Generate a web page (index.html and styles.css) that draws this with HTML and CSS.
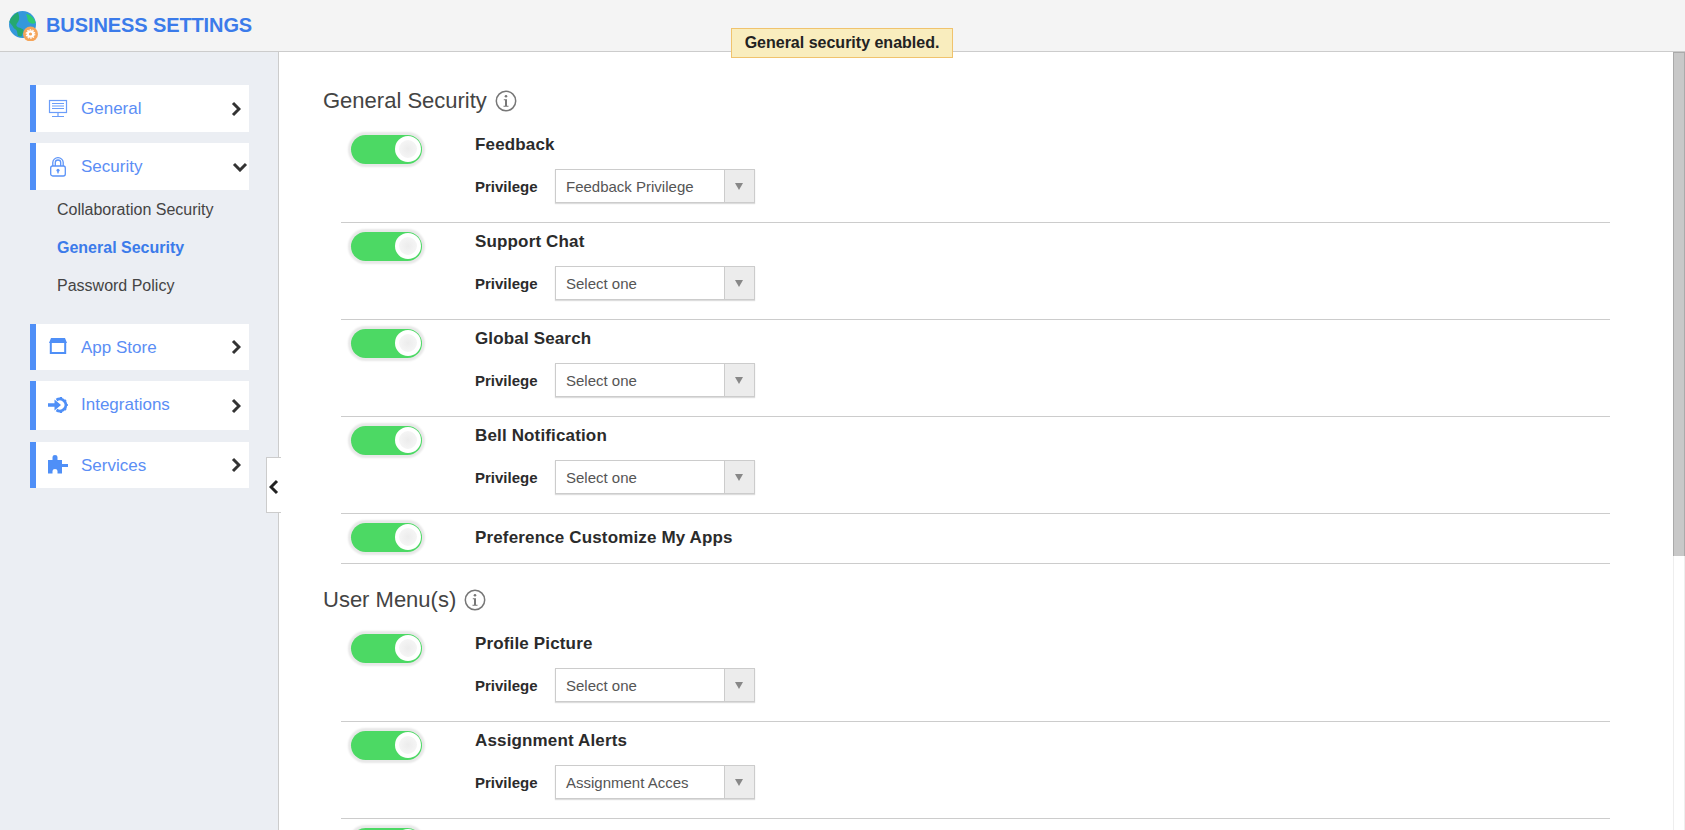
FILE: index.html
```html
<!DOCTYPE html>
<html lang="en">
<head>
<meta charset="utf-8">
<title>Business Settings</title>
<link rel="stylesheet" href="styles.css">
</head>
<body>
<div class="app">
  <header class="topbar">
    <svg class="logo" viewBox="0 0 30 30" width="30" height="30" aria-hidden="true">
      <circle cx="13.5" cy="13.5" r="13.5" fill="#3498db"/>
      <path d="M9 1.2C5 3 1.5 6.5.4 11c1.5 2.5 3 3 4 5.5 1 2 3 1.5 3.500 3.500l1 5c2 .5 3 .5 4 .3 0-3 2-3 1.500-6-.5-2-3.500-2-5.500-3-2-1-2-3-.5-4.500C10 10 11 7 9 1.200Z" fill="#25a86f"/>
      <path d="M17 3c2 4 1 6 3 8s4 2 6.500 1C26 8 22 3.500 17 3Z" fill="#2ecc71"/>
      <circle cx="21.500" cy="23" r="7.500" fill="#f5a55a"/>
      <circle cx="21.500" cy="23" r="2.700" fill="none" stroke="#fff" stroke-width="2.200"/>
      <circle cx="21.500" cy="23" r="4.300" fill="none" stroke="#fff" stroke-width="1.100" stroke-dasharray="1.500 1.200"/>
    </svg>
    <h1 class="app-title">BUSINESS SETTINGS</h1>
  </header>

  <div class="toast">General security enabled.</div>

  <div class="body">
    <aside class="sidebar">
      <div class="nav-item">
        <span class="nav-label">
          <svg class="nav-icon" viewBox="0 0 20 20" width="20" height="20" aria-hidden="true"><g fill="none" stroke="#6b9df9" stroke-width="1.200"><rect x="1.500" y="1.500" width="17" height="12"/><path d="M4 4.500h12M4 7h12M4 9.500h12M10 14v3M4 17.500h12"/></g></svg>
          General
        </span>
        <svg class="chev" viewBox="0 0 10 16" width="10" height="16" aria-hidden="true"><path d="M2 2l6 6-6 6" fill="none" stroke="#333" stroke-width="3"/></svg>
      </div>

      <div class="nav-item">
        <span class="nav-label">
          <svg class="nav-icon" viewBox="0 0 20 20" width="20" height="20" aria-hidden="true"><g fill="none" stroke="#5b93f8" stroke-width="1.300"><path d="M4.800 9V5.500a5.200 4.800 0 0 1 10.400 0V9M7.300 9V5.500a2.700 2.500 0 0 1 5.400 0V9"/><rect x="2.700" y="9" width="14.600" height="10" rx="2"/></g><circle cx="10" cy="13.200" r="1.500" fill="#5b93f8"/><rect x="9.300" y="13.200" width="1.400" height="3.200" fill="#5b93f8"/></svg>
          Security
        </span>
        <svg class="chev-down" viewBox="0 0 16 10" width="16" height="10" aria-hidden="true"><path d="M2 2l6 6 6-6" fill="none" stroke="#333" stroke-width="3"/></svg>
      </div>
      <ul class="sub-list">
        <li class="sub-item">Collaboration Security</li>
        <li class="sub-item sub-item-active">General Security</li>
        <li class="sub-item">Password Policy</li>
      </ul>

      <div class="nav-item nav-short">
        <span class="nav-label">
          <svg class="nav-icon" viewBox="0 0 20 20" width="20" height="20" aria-hidden="true"><path d="M3 1h14l2 5H1Z" fill="#4f8ff7"/><path d="M2.800 6v10h14.400V6" fill="none" stroke="#4f8ff7" stroke-width="2"/></svg>
          App Store
        </span>
        <svg class="chev" viewBox="0 0 10 16" width="10" height="16" aria-hidden="true"><path d="M2 2l6 6-6 6" fill="none" stroke="#333" stroke-width="3"/></svg>
      </div>

      <div class="nav-item nav-tall">
        <span class="nav-label">
          <svg class="nav-icon" viewBox="0 0 20 20" width="20" height="20" aria-hidden="true"><g fill="none" stroke="#4f8ff7"><path d="M8.500 5a6 6 0 1 1 0 10" stroke-width="2.800"/><path d="M13 2v2.500M13 15.500V18M19.800 10h-2M18 5.200l-1.500 1.300M18 14.800l-1.500-1.300" stroke-width="2.200"/></g><path d="M0 8.200h6.500V4.500L13 10l-6.500 5.500v-3.700H0Z" fill="#4f8ff7"/></svg>
          Integrations
        </span>
        <svg class="chev" viewBox="0 0 10 16" width="10" height="16" aria-hidden="true"><path d="M2 2l6 6-6 6" fill="none" stroke="#333" stroke-width="3"/></svg>
      </div>

      <div class="nav-item nav-short">
        <span class="nav-label">
          <svg class="nav-icon" viewBox="0 0 20 20" width="20" height="20" aria-hidden="true"><path d="M0 5H4.500V2Q4.500 0 7 0 9.500 0 9.500 2V5H14V9H20V12H14V18.500H9.500V16Q9.500 14 7 14 4.500 14 4.500 16V18.500H0Z" fill="#4f8ff7"/></svg>
          Services
        </span>
        <svg class="chev" viewBox="0 0 10 16" width="10" height="16" aria-hidden="true"><path d="M2 2l6 6-6 6" fill="none" stroke="#333" stroke-width="3"/></svg>
      </div>

      <button class="collapse" type="button" aria-label="Collapse">
        <svg viewBox="0 0 10 16" width="10" height="16" aria-hidden="true"><path d="M8 2L2 8l6 6" fill="none" stroke="#222" stroke-width="3"/></svg>
      </button>
    </aside>

    <main class="content">
      <h2 class="section-title">General Security
        <svg class="info" viewBox="0 0 22 22" width="22" height="22" aria-hidden="true"><circle cx="11" cy="11" r="9.700" fill="none" stroke="#777" stroke-width="1.500"/><circle cx="11" cy="6.300" r="1.300" fill="#777"/><path d="M8.800 9.200H12v6.500h1.500v1h-5v-1H10V10.200H8.800Z" fill="#777"/></svg>
      </h2>

      <section class="row">
        <span class="toggle"><span class="knob"></span></span>
        <div class="row-body">
          <div class="row-name">Feedback</div>
          <div class="priv">
            <span class="priv-label">Privilege</span>
            <div class="select"><span class="select-value">Feedback Privilege</span><span class="select-arrow"></span></div>
          </div>
        </div>
      </section>

      <section class="row">
        <span class="toggle"><span class="knob"></span></span>
        <div class="row-body">
          <div class="row-name">Support Chat</div>
          <div class="priv">
            <span class="priv-label">Privilege</span>
            <div class="select"><span class="select-value">Select one</span><span class="select-arrow"></span></div>
          </div>
        </div>
      </section>

      <section class="row">
        <span class="toggle"><span class="knob"></span></span>
        <div class="row-body">
          <div class="row-name">Global Search</div>
          <div class="priv">
            <span class="priv-label">Privilege</span>
            <div class="select"><span class="select-value">Select one</span><span class="select-arrow"></span></div>
          </div>
        </div>
      </section>

      <section class="row">
        <span class="toggle"><span class="knob"></span></span>
        <div class="row-body">
          <div class="row-name">Bell Notification</div>
          <div class="priv">
            <span class="priv-label">Privilege</span>
            <div class="select"><span class="select-value">Select one</span><span class="select-arrow"></span></div>
          </div>
        </div>
      </section>

      <section class="row row-single">
        <span class="toggle"><span class="knob"></span></span>
        <div class="row-body">
          <div class="row-name">Preference Customize My Apps</div>
        </div>
      </section>

      <h2 class="section-title section-title-next">User Menu(s)
        <svg class="info" viewBox="0 0 22 22" width="22" height="22" aria-hidden="true"><circle cx="11" cy="11" r="9.700" fill="none" stroke="#777" stroke-width="1.500"/><circle cx="11" cy="6.300" r="1.300" fill="#777"/><path d="M8.800 9.200H12v6.500h1.500v1h-5v-1H10V10.200H8.800Z" fill="#777"/></svg>
      </h2>

      <section class="row">
        <span class="toggle"><span class="knob"></span></span>
        <div class="row-body">
          <div class="row-name">Profile Picture</div>
          <div class="priv">
            <span class="priv-label">Privilege</span>
            <div class="select"><span class="select-value">Select one</span><span class="select-arrow"></span></div>
          </div>
        </div>
      </section>

      <section class="row">
        <span class="toggle"><span class="knob"></span></span>
        <div class="row-body">
          <div class="row-name">Assignment Alerts</div>
          <div class="priv">
            <span class="priv-label">Privilege</span>
            <div class="select"><span class="select-value">Assignment Acces</span><span class="select-arrow"></span></div>
          </div>
        </div>
      </section>

      <section class="row">
        <span class="toggle"><span class="knob"></span></span>
      </section>
    </main>

    <div class="scrollbar"><div class="scroll-thumb"></div></div>
  </div>
</div>
</body>
</html>
```

FILE: styles.css
```css
* { box-sizing: border-box; }
html, body { margin: 0; height: 100%; overflow: hidden; }
body { font-family: "Liberation Sans", Arial, sans-serif; color: #333; background: #fff; }

.app { position: relative; display: flex; flex-direction: column; height: 830px; }

.topbar {
  display: flex; align-items: center; gap: 7px;
  height: 52px; padding: 0 0 0 9px;
  background: #f4f4f4; border-bottom: 1px solid #ccc;
}
.logo { display: block; flex: none; }
.app-title { margin: 0; font-size: 20px; letter-spacing: -0.1px; font-weight: 700; color: #3b7bea; }

.toast {
  position: absolute; left: 731px; top: 28px; width: 222px; height: 30px;
  display: flex; align-items: center; justify-content: center;
  background: #f9edbe; border: 1px solid #f0c36d;
  font-size: 16px; font-weight: 700; color: #222;
}

.body { flex: 1; display: flex; min-height: 0; }

.sidebar {
  position: relative; flex: none; width: 279px;
  padding: 33px 29px 0 30px;
  background: #ebeef3; border-right: 1px solid #ccc;
}
.nav-item {
  display: flex; align-items: center; justify-content: space-between;
  height: 47px; margin-bottom: 11px; padding-right: 8px;
  background: #fff; border-left: 6px solid #4f8ff7;
}
.nav-short { height: 46px; }
.nav-tall { height: 49px; margin-bottom: 12px; }
.nav-label { display: flex; align-items: center; gap: 13px; padding-left: 12px; font-size: 17px; color: #5b8ef5; }
.nav-short .nav-label { padding-top: 2px; }
.nav-short .nav-icon { margin-top: -2px; }
.nav-tall .nav-label { padding-bottom: 2px; }
.nav-icon { display: block; flex: none; }
.chev, .chev-down { display: block; flex: none; }
.chev-down { margin-right: -7px; }

.sub-list { list-style: none; margin: -11px 0 20px; padding: 0; }
.sub-item { display: flex; align-items: center; height: 38px; padding: 2px 0 0 27px; font-size: 16px; color: #444; }
.sub-item-active { font-weight: 700; color: #3b7bea; }

.collapse {
  position: absolute; left: 266px; top: 405px; width: 15px; height: 56px;
  display: flex; align-items: center; justify-content: center; padding: 4px 0 0;
  background: #fff; border: 1px solid #ccc; border-right: 0;
}

.content { flex: 1; min-width: 0; padding: 34px 63px 0 44px; overflow: hidden; }

.section-title {
  display: flex; align-items: center; gap: 8px;
  height: 30px; margin: 0 0 10px;
  font-size: 22px; font-weight: 400; color: #444;
}
.section-title-next { margin-top: 21px; }
.info { display: block; flex: none; }

.row {
  display: flex; align-items: flex-start;
  height: 97px; margin-left: 18px; padding: 9px 0 0 10px;
  border-bottom: 1px solid #ccc;
}
.row-single { height: 50px; }

.toggle {
  position: relative; flex: none; display: block;
  width: 71px; height: 29px; border-radius: 15px;
  background: #4cd964; box-shadow: 0 0 2px 3px #e8e8e8;
}
.knob {
  position: absolute; right: 1px; top: 1px; width: 26px; height: 26px; border-radius: 50%;
  background: radial-gradient(circle, #ececec 0, #f5f5f5 70%); border: 4px solid #fff;
}

.row-body { margin: 1px 0 0 53px; }
.row-name { height: 18px; font-size: 17px; letter-spacing: 0.15px; line-height: 18px; font-weight: 700; color: #2b2b2b; }
.row-single .row-name { margin-top: 5px; }
.priv { display: flex; align-items: center; margin-top: 15px; }
.priv-label { width: 80px; font-size: 15px; font-weight: 700; color: #2b2b2b; }

.select {
  display: flex; align-items: stretch; width: 200px; height: 34px;
  background: #fff; border: 1px solid #ccc; box-shadow: 0 1px 1px #ddd;
}
.select-value { flex: 1; padding-left: 10px; font-size: 15px; line-height: 33px; color: #555; }
.select-arrow {
  position: relative; flex: none; width: 30px;
  background: #ececec; border-left: 1px solid #ccc;
}
.select-arrow::after {
  content: ""; position: absolute; left: 10px; top: 13px;
  border-left: 4.500px solid transparent; border-right: 4.500px solid transparent;
  border-top: 7px solid #888;
}

.scrollbar { flex: none; width: 12px; background: #fff; border-left: 1px solid #eee; border-right: 1px solid #eee; }
.scroll-thumb { height: 504px; margin: 0 -1px; background: #c8c8c8; border-left: 1px solid #aaa; border-right: 1px solid #aaa; border-top: 1px solid #aaa; }
```
